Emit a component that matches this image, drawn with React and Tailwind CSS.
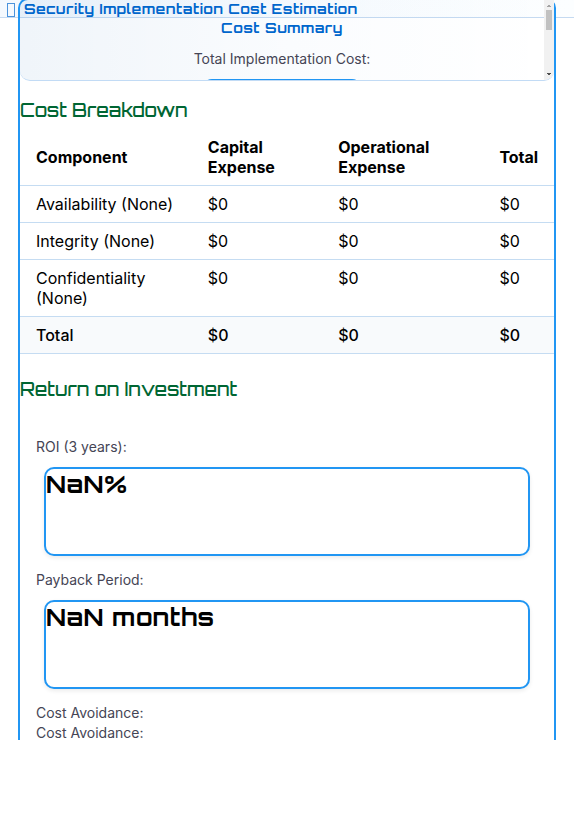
const rows = [
  ['Availability (None)', '$0', '$0', '$0'],
  ['Integrity (None)', '$0', '$0', '$0'],
  ['Confidentiality (None)', '$0', '$0', '$0'],
];

const display = 'font-[Orbitron,"DejaVu_Sans",sans-serif] whitespace-nowrap';

function SectionTitle({ children }) {
  return (
    <h3 className={`${display} text-[18px] leading-6 font-medium tracking-[-0.01px] text-[#006633]`}>
      {children}
    </h3>
  );
}

function Metric({ label, value }) {
  return (
    <div className="h-[133px]">
      <div className="text-sm leading-5 text-[#454555]">{label}</div>
      <div className="mx-2 mt-[10px] h-[89px] rounded-[10px] border-2 border-[#2196f3] bg-white shadow-[0_2px_4px_rgba(0,0,0,0.08)]">
        <div className={`${display} text-2xl leading-[30px] font-bold tracking-[0.5px] text-black`}>
          {value}
        </div>
      </div>
    </div>
  );
}

export default function App() {
  return (
    <div className="relative h-[831px] w-[574px] overflow-hidden bg-white font-[Inter,sans-serif] text-black">
      <div className="absolute inset-x-0 top-0 h-[18px] border-b border-[#c5daf1] bg-linear-to-r from-[#f4f9fe] to-[#fcfeff]" />
      <div className="relative h-[740px] overflow-hidden">
        <div className="mx-[18px] -mt-0.5 h-[760px] rounded-t-[10px] border-2 border-[#2196f3]">
          <section className="relative h-[81px] overflow-hidden rounded-b-[10px] border-b border-[#c2dbf5] bg-linear-to-r from-[#0055aa]/6 via-[#0066cc]/2 to-[#0066cc]/0">
            <div className="h-[18px] pl-1">
              <h2 className={`${display} text-[14px] leading-[18px] font-bold tracking-[0.5px] text-[#0066cc]`}>
                Security Implementation Cost Estimation
              </h2>
            </div>
            <div className="mr-[10px] flex flex-col items-center">
              <h3 className={`${display} text-[14px] leading-5 font-bold tracking-[0.6px] text-[#0066cc]`}>Cost Summary</h3>
              <p className="mt-[11px] text-sm leading-5 text-[#454555]">Total Implementation Cost:</p>
              <div className="mt-[10px] h-5 w-[160px] rounded-[10px] border-2 border-[#2196f3]" />
            </div>
            <div className="absolute top-0 right-0 h-20 w-[10px] bg-[#f1f1f1]">
              <div className="mx-auto mt-[10px] h-5 w-1.5 bg-[#c1c1c1]" />
              <svg className="absolute inset-0" width="10" height="80" shapeRendering="crispEdges">
                <path d="M4 5h2v1h1v1H3V6h1z" fill="#a3a3a3" />
                <path d="M3 73h4v1H6v1H4v-1H3z" fill="#505050" />
              </svg>
            </div>
          </section>
          <div className="mt-[17px] h-[31px]">
            <SectionTitle>Cost Breakdown</SectionTitle>
          </div>
          <table className="w-[534px] table-fixed border-collapse text-left text-base leading-5">
            <colgroup>
              <col className="w-[171.8px]" />
              <col className="w-[130.4px]" />
              <col className="w-[161.2px]" />
              <col className="w-[70.6px]" />
            </colgroup>
            <thead>
              <tr className="border-b border-[#c5dcf2]">
                {['Component', 'Capital Expense', 'Operational Expense', 'Total'].map((h) => (
                  <th key={h} className="px-4 py-2 font-bold">{h}</th>
                ))}
              </tr>
            </thead>
            <tbody>
              {rows.map((row) => (
                <tr key={row[0]} className="border-b border-[#c5dcf2]">
                  {row.map((c, i) => (
                    <td key={i} className="px-4 py-2 align-top">{c}</td>
                  ))}
                </tr>
              ))}
              <tr className="border-b border-[#c5dcf2] bg-[#f8fafc] font-medium">
                {['Total', '$0', '$0', '$0'].map((c, i) => (
                  <td key={i} className="px-4 py-2">{c}</td>
                ))}
              </tr>
            </tbody>
          </table>
          <div className="mt-[23px] h-[60px]">
            <SectionTitle>Return on Investment</SectionTitle>
          </div>
          <div className="px-4">
            <Metric label="ROI (3 years):" value="NaN%" />
            <Metric label="Payback Period:" value="NaN months" />
            <div className="text-sm leading-5 text-[#454555]">Cost Avoidance:</div>
            <div className="text-sm leading-5 text-[#454555]">Cost Avoidance:</div>
          </div>
        </div>
      </div>
      <div className="absolute top-[3px] left-[7px] h-[14px] w-2 border border-[#4b93dc]" />
    </div>
  );
}
